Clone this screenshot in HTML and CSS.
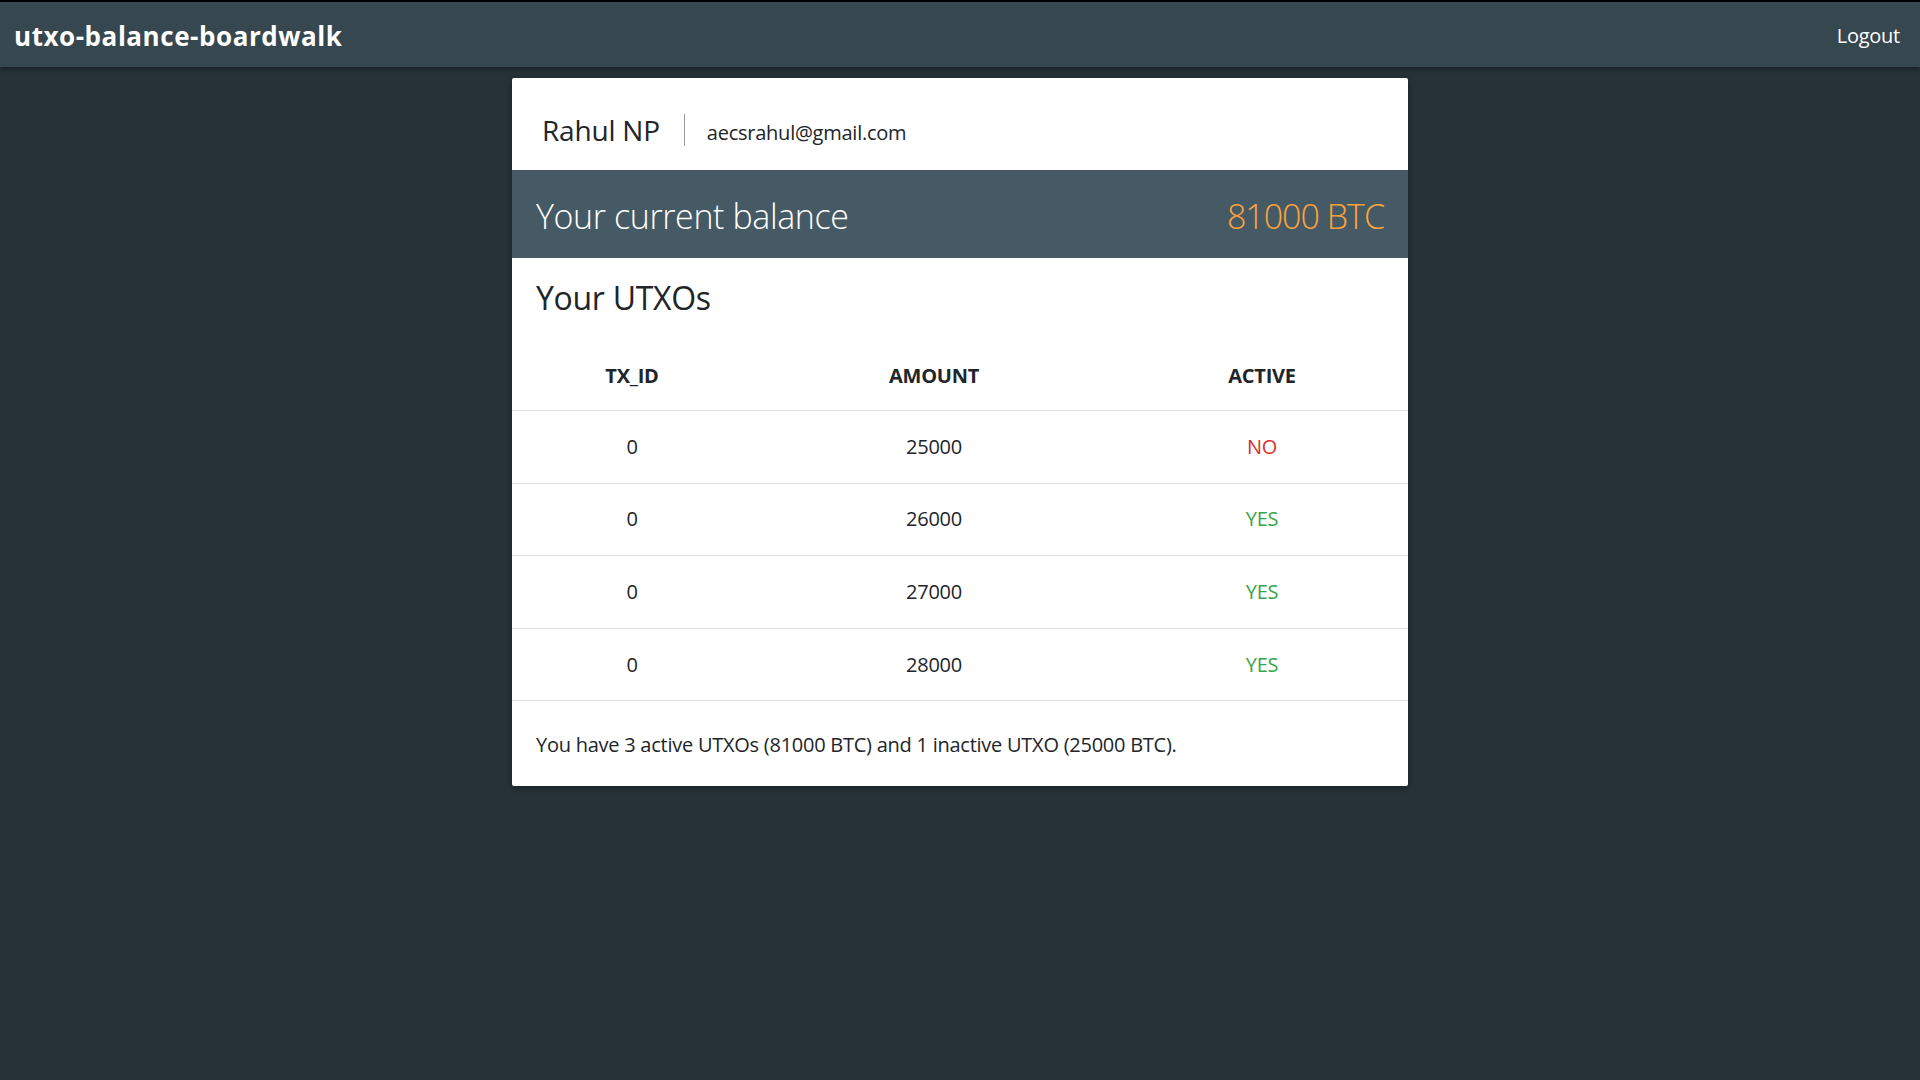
FILE: index.html
```html
<!DOCTYPE html>
<html lang="en">
<head>
<meta charset="utf-8">
<title>utxo-balance-boardwalk</title>
<link rel="stylesheet" href="styles.css">
</head>
<body>
<nav class="navbar">
  <span class="brand">utxo-balance-boardwalk</span>
  <a class="logout" href="#">Logout</a>
</nav>
<main class="main">
  <div class="card">
    <div class="card-head">
      <span class="user-name">Rahul NP</span>
      <span class="divider"></span>
      <span class="user-email">aecsrahul@gmail.com</span>
    </div>
    <div class="balance-bar">
      <span class="balance-label">Your current balance</span>
      <span class="balance-amount">81000 BTC</span>
    </div>
    <h3 class="section-title">Your UTXOs</h3>
    <table class="utxo-table">
      <colgroup><col class="c1"><col class="c2"><col class="c3"></colgroup>
      <thead>
        <tr><th>TX_ID</th><th>AMOUNT</th><th>ACTIVE</th></tr>
      </thead>
      <tbody>
        <tr><td>0</td><td>25000</td><td class="no">NO</td></tr>
        <tr><td>0</td><td>26000</td><td class="yes">YES</td></tr>
        <tr><td>0</td><td>27000</td><td class="yes">YES</td></tr>
        <tr><td>0</td><td>28000</td><td class="yes">YES</td></tr>
      </tbody>
    </table>
    <p class="summary">You have 3 active UTXOs (81000 BTC) and 1 inactive UTXO (25000 BTC).</p>
  </div>
</main>
</body>
</html>
```
FILE: styles.css
```css
* { box-sizing: border-box; }
html, body { margin: 0; padding: 0; }
body {
  background: #263238;
  font-family: "Open Sans", "Noto Sans", sans-serif;
  font-size: 20px;
  line-height: 1.5;
  letter-spacing: -0.25px;
  color: #212529;
  min-height: 1080px;
}
.navbar {
  border-top: 2px solid #000;
  height: 67px;
  background: #37474f;
  display: flex;
  align-items: center;
  justify-content: space-between;
  padding: 3px 20px 0 14px;
  box-shadow: 0 2px 4px rgba(0,0,0,0.35);
  position: relative;
}
.brand { color: #fff; font-weight: 700; font-size: 26px; letter-spacing: 0.55px; }
.logout { color: #fff; text-decoration: none; font-size: 20px; }
.main { padding-top: 11px; }
.card {
  width: 896px;
  margin: 0 auto;
  background: #fff;
  border-radius: 2px;
  box-shadow: 0 2px 6px rgba(0,0,0,0.35);
}
.card-head {
  height: 92px;
  display: flex;
  align-items: center;
  padding: 12px 30px 0;
}
.user-name { font-size: 28px; color: #212529; letter-spacing: -0.2px; }
.divider { width: 1px; height: 32px; background: #999; margin: 0 22px 0 24px; }
.user-email { font-size: 20px; padding-top: 6px; }
.balance-bar {
  height: 88px;
  background: #455a64;
  display: flex;
  align-items: center;
  justify-content: space-between;
  padding: 5px 24px 0;
  font-size: 34px;
  font-weight: 300;
  letter-spacing: -0.4px;
}
.balance-label { color: #fff; }
.balance-amount { color: #ffa43c; letter-spacing: -1px; }
.section-title {
  margin: 0;
  padding: 20px 24px 0;
  font-size: 32px;
  font-weight: 400;
  line-height: 40px;
  letter-spacing: -0.3px;
}
.utxo-table {
  width: 100%;
  border-collapse: collapse;
  margin-top: 43px;
}
.c1 { width: 240px; }
.c2 { width: 364px; }
.c3 { width: 292px; }
.utxo-table th {
  text-transform: uppercase;
  font-weight: 700;
  padding: 0 0 19px;
  text-align: center;
  border-bottom: 1px solid #dee2e6;
}
.utxo-table td {
  text-align: center;
  height: 72.6px;
  padding: 0;
  border-bottom: 1px solid #dee2e6;
}
.no { color: #d9302f; }
.yes { color: #36a54a; }
.summary { margin: 0; padding: 29px 24px 26px; }
```
